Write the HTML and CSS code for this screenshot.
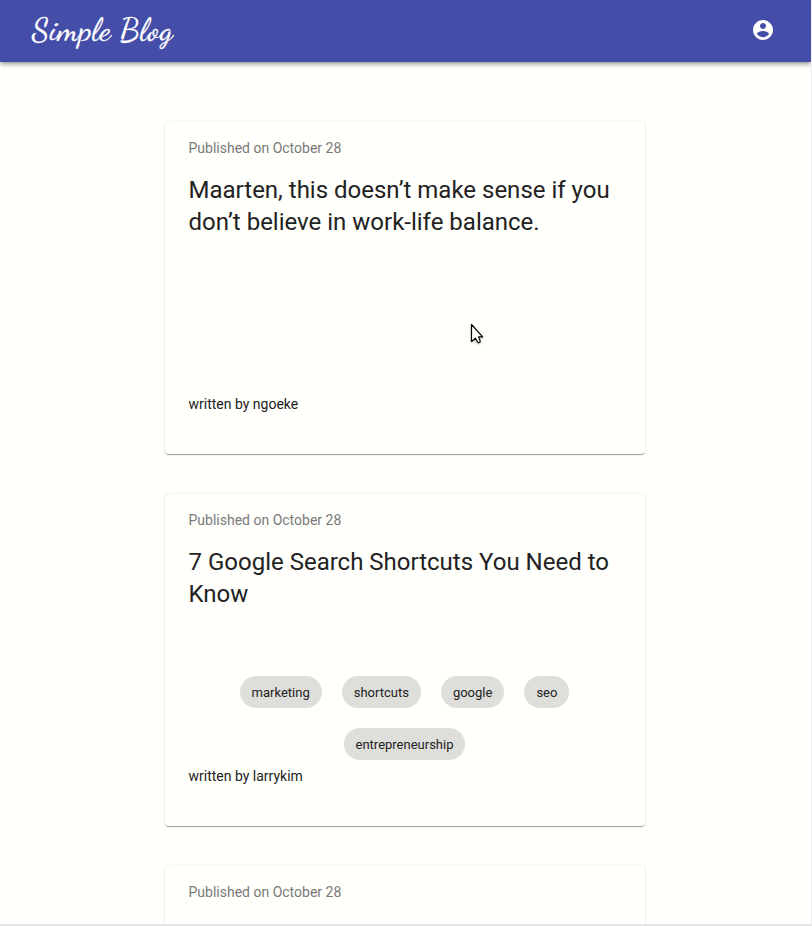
FILE: index.html
```html
<!DOCTYPE html>
<html lang="en">
<head>
<meta charset="utf-8">
<title>Simple Blog</title>
<link rel="stylesheet" href="styles.css">
</head>
<body>
<div class="page">
  <header class="app-bar">
    <div class="logo">Simple Blog</div>
    <svg class="account" viewBox="0 0 24 24" width="24" height="24"><path fill="#fff" d="M12 2C6.480 2 2 6.480 2 12s4.480 10 10 10 10-4.480 10-10S17.520 2 12 2zm0 3c1.660 0 3 1.340 3 3s-1.340 3-3 3-3-1.340-3-3 1.340-3 3-3zm0 14.200c-2.500 0-4.710-1.280-6-3.220.030-1.990 4-3.080 6-3.080 1.990 0 5.970 1.090 6 3.080-1.290 1.940-3.500 3.220-6 3.220z"/></svg>
  </header>
  <main class="posts">
    <article class="card">
      <p class="date">Published on October 28</p>
      <h2 class="title">Maarten, this doesn’t make sense if you don’t believe in work-life balance.</h2>
      <div class="tags"></div>
      <p class="author">written by ngoeke</p>
    </article>
    <article class="card">
      <p class="date">Published on October 28</p>
      <h2 class="title">7 Google Search Shortcuts You Need to Know</h2>
      <div class="tags">
        <span class="chip">marketing</span>
        <span class="chip">shortcuts</span>
        <span class="chip">google</span>
        <span class="chip">seo</span>
        <span class="chip">entrepreneurship</span>
      </div>
      <p class="author">written by larrykim</p>
    </article>
    <article class="card">
      <p class="date">Published on October 28</p>
    </article>
  </main>
</div>
<svg class="cursor" viewBox="0 0 14 22" width="14" height="22"><path d="M1.500 1.500V18.500L5.500 15.200 8 19.500Q9.500 20.200 10.300 18.600L8.600 13.800H12.700Z" fill="#fffffc" stroke="#080808" stroke-width="1.200" stroke-linejoin="round"/></svg>
</body>
</html>
```
FILE: styles.css
```css
* { box-sizing: border-box; }
body {
  margin: 0;
  background: #fffffc;
  color: #222;
  font-family: Roboto, "Liberation Sans", sans-serif;
}
.page {
  height: 926px;
  overflow: hidden;
  border-right: 1px solid #f0f1f0;
  border-bottom: 2px solid #e3e7e5;
}
.app-bar {
  height: 62px;
  padding: 0 36px 2px 32px;
  display: flex;
  align-items: center;
  justify-content: space-between;
  background: #444da8;
  box-shadow: 0 2px 4px -1px rgba(0,0,0,.35), 0 3px 5px rgba(0,0,0,.18);
}
.logo {
  color: #fff;
  font-family: "Dancing Script", cursive;
  font-size: 32px;
  letter-spacing: .5px;
  line-height: 60px;
  white-space: nowrap;
  -webkit-text-stroke: .3px #fff;
}
.posts {
  display: flex;
  flex-direction: column;
  align-items: center;
  gap: 40px;
  padding: 60px 2px 0 0;
}
.card {
  width: 480px;
  height: 332px;
  flex: none;
  padding: 16px 24px;
  border-radius: 4px;
  background: #fffffc;
  box-shadow: 0 2px 1px -1px rgba(0,0,0,.2), 0 1px 1px rgba(0,0,0,.2), 0 0 2px rgba(0,0,0,.16);
}
.date, .author {
  margin: 0;
  font-size: 14px;
  line-height: 20px;
}
.date { color: #7a7a78; }
.title {
  margin: 16px 0 0;
  font-size: 24px;
  font-weight: 400;
  line-height: 32px;
}
.tags {
  height: 156px;
  padding: 60px 40px 0;
  display: flex;
  flex-wrap: wrap;
  justify-content: center;
  align-content: center;
  gap: 20px;
}
.chip {
  height: 32px;
  padding: 0 12px;
  border-radius: 16px;
  background: #dededb;
  font-size: 13px;
  line-height: 33px;
}
.cursor {
  position: absolute;
  left: 470px;
  top: 323px;
  filter: drop-shadow(0 1px 1px rgba(0,0,0,.3));
}
```
